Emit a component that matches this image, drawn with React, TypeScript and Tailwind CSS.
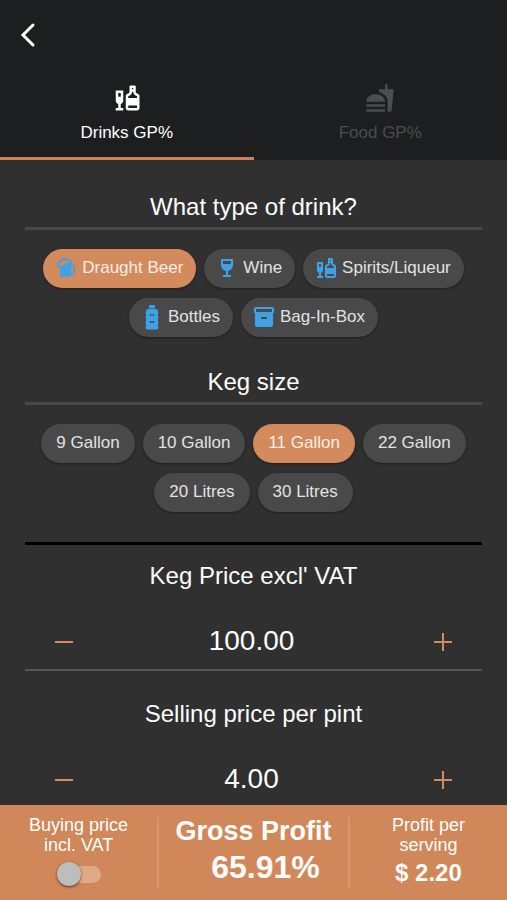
import { useState } from "react";
import type { ReactNode } from "react";
import { MdFastfood, MdInventory2, MdLiquor, MdSportsBar, MdWineBar } from "react-icons/md";

const VAT = 1.2;

const BottleIcon = ({ className }: { className?: string }) => (
  <svg viewBox="0 0 24 26" fill="currentColor" className={className} aria-hidden="true">
    <rect x="9" y="0" width="6" height="3" rx="0.5" />
    <path
      fillRule="evenodd"
      d="M9 4h6c2 0 3.500 1.500 3.500 3.500V9l-.7 1.200.7 1.200v3.200l-.7 1.200.7 1.200v3.200l-.7 1 .7 1V24c0 .8-.6 1.500-1.500 1.500H7c-.9 0-1.500-.7-1.500-1.500v-2l.7-1-.7-1v-3.200l.7-1.200-.7-1.200v-3.200l.7-1.200L5.500 9V7.500C5.500 5.500 7 4 9 4zm.5 5.500V11h5V9.500zm0 7.500v1.500h5V17z"
    />
  </svg>
);

const drinks = [
  { name: "Draught Beer", icon: <MdSportsBar className="w-6 h-6" /> },
  { name: "Wine", icon: <MdWineBar className="w-6 h-6" /> },
  { name: "Spirits/Liqueur", icon: <MdLiquor className="w-6 h-6" /> },
  { name: "Bottles", icon: <BottleIcon className="w-6 h-[25px]" /> },
  { name: "Bag-In-Box", icon: <MdInventory2 className="w-6 h-6" /> },
];

const kegs = [
  { name: "9 Gallon", pints: 72 },
  { name: "10 Gallon", pints: 80 },
  { name: "11 Gallon", pints: 88 },
  { name: "22 Gallon", pints: 176 },
  { name: "20 Litres", pints: 35 },
  { name: "30 Litres", pints: 52 },
];

interface ChipProps {
  label: string;
  icon?: ReactNode;
  selected: boolean;
  onClick: () => void;
}

function Chip({ label, icon, selected, onClick }: ChipProps) {
  return (
    <button
      type="button"
      aria-pressed={selected}
      onClick={onClick}
      className={`flex items-center gap-1 h-[39px] pb-px rounded-full text-[17px] whitespace-nowrap shadow-sm shadow-black/30 ${
        icon ? "pl-[11px] pr-[13px]" : "px-[15px]"
      } ${selected ? "bg-[#d38a5c] text-[#fbeee6]" : "bg-[#494949] text-[#e2e2e2]"}`}
    >
      {icon && <span className="text-[#3fa2e6]">{icon}</span>}
      {label}
    </button>
  );
}

function Heading({ children }: { children: ReactNode }) {
  return (
    <h2 className="pb-1 border-b-3 border-[#4a4a4a] text-center text-2xl leading-8 text-white">
      {children}
    </h2>
  );
}

interface StepperProps {
  id: string;
  label: string;
  value: string;
  step: number;
  onChange: (value: string) => void;
}

function Stepper({ id, label, value, step, onChange }: StepperProps) {
  const bump = (by: number) => onChange(Math.max(0, (parseFloat(value) || 0) + by).toFixed(2));

  return (
    <div className="pt-[15px] text-white">
      <label htmlFor={id} className="block text-center text-2xl leading-8">
        {label}
      </label>
      <div className="flex items-center justify-between px-[27px] pt-[26px] pb-[5px]">
        <button
          type="button"
          aria-label={`Decrease ${label}`}
          onClick={() => bump(-step)}
          className="flex items-center justify-center w-6 h-10 text-[#d38a5c]"
        >
          <svg viewBox="0 0 24 24" className="w-6 h-6" stroke="currentColor" strokeWidth="2">
            <path d="M3 13h18" />
          </svg>
        </button>
        <input
          id={id}
          type="text"
          inputMode="decimal"
          value={value}
          onChange={(e) => onChange(e.target.value)}
          className="flex-1 min-w-0 h-[46px] pr-1 bg-transparent text-center text-[28px] outline-none"
        />
        <button
          type="button"
          aria-label={`Increase ${label}`}
          onClick={() => bump(step)}
          className="flex items-center justify-center w-6 h-10 text-[#d38a5c]"
        >
          <svg viewBox="0 0 24 24" className="w-6 h-6" stroke="currentColor" strokeWidth="2">
            <path d="M3 13h18M12 4v18" />
          </svg>
        </button>
      </div>
    </div>
  );
}

export default function App() {
  const [tab, setTab] = useState("drinks");
  const [drink, setDrink] = useState("Draught Beer");
  const [keg, setKeg] = useState("11 Gallon");
  const [kegPrice, setKegPrice] = useState("100.00");
  const [sellPrice, setSellPrice] = useState("4.00");
  const [inclVat, setInclVat] = useState(false);

  const pints = kegs.find((k) => k.name === keg)?.pints ?? 88;
  const cost = (parseFloat(kegPrice) || 0) / (inclVat ? VAT : 1) / pints;
  const net = (parseFloat(sellPrice) || 0) / VAT;
  const profit = net - cost;
  const margin = net > 0 ? (profit / net) * 100 : 0;

  return (
    <div className="flex flex-col min-h-screen bg-[#303030] font-['Liberation_Sans',Arial,sans-serif]">
      <header className="bg-[#1c1e1f]">
        <button type="button" aria-label="Back" className="flex items-center h-[70px] pl-4 text-white">
          <svg viewBox="0 0 24 28" className="w-6 h-7" fill="none" stroke="currentColor" strokeWidth="3">
            <path d="M17 4 7 14l10 10" strokeLinecap="round" strokeLinejoin="miter" />
          </svg>
        </button>
        <div role="tablist" className="grid grid-cols-2">
          <button
            type="button"
            role="tab"
            aria-selected={tab === "drinks"}
            onClick={() => setTab("drinks")}
            className={`flex flex-col items-center gap-2 pt-[13px] pb-3 border-b-3 text-[17px] leading-6 ${
              tab === "drinks" ? "border-[#cc8158] text-white" : "border-transparent text-[#4b4d4e]"
            }`}
          >
            <MdLiquor className="w-[30px] h-[30px]" />
            Drinks GP%
          </button>
          <button
            type="button"
            role="tab"
            aria-selected={tab === "food"}
            onClick={() => setTab("food")}
            className={`flex flex-col items-center gap-2 pt-[13px] pb-3 border-b-3 text-[17px] leading-6 ${
              tab === "food" ? "border-[#cc8158] text-white" : "border-transparent text-[#4b4d4e]"
            }`}
          >
            <MdFastfood className="w-[30px] h-[30px]" />
            Food GP%
          </button>
        </div>
      </header>

      <main className="flex-1 px-[25px] pt-[31px]">
        <section>
          <Heading>What type of drink?</Heading>
          <div className="flex flex-wrap justify-center gap-x-2 gap-y-[10px] pt-[19px]">
            {drinks.map((d) => (
              <Chip
                key={d.name}
                label={d.name}
                icon={d.icon}
                selected={drink === d.name}
                onClick={() => setDrink(d.name)}
              />
            ))}
          </div>
        </section>

        <section className="pt-[29px]">
          <Heading>Keg size</Heading>
          <div className="flex flex-wrap justify-center gap-x-2 gap-y-[10px] pt-[19px]">
            {kegs.map((k) => (
              <Chip key={k.name} label={k.name} selected={keg === k.name} onClick={() => setKeg(k.name)} />
            ))}
          </div>
        </section>

        <hr className="mt-[30px] border-t-3 border-black" />
        <Stepper id="keg-price" label="Keg Price excl' VAT" value={kegPrice} step={1} onChange={setKegPrice} />
        <hr className="mb-3 border-t-2 border-[#555555]" />
        <Stepper
          id="sell-price"
          label="Selling price per pint"
          value={sellPrice}
          step={0.1}
          onChange={setSellPrice}
        />
      </main>

      <footer className="sticky bottom-0 grid grid-cols-[31fr_38fr_31fr] -mt-3 h-[95px] py-[10px] bg-[#d0875a] text-center text-white">
        <div className="flex flex-col items-center">
          <label htmlFor="incl-vat" className="text-lg leading-5">
            Buying price
            <br />
            incl. VAT
          </label>
          <span className="relative flex items-center w-11 h-6 mt-[7px]">
            <input
              id="incl-vat"
              type="checkbox"
              role="switch"
              checked={inclVat}
              onChange={(e) => setInclVat(e.target.checked)}
              className="peer appearance-none w-10 h-[17px] ml-1 rounded-full bg-[#e0aa88]"
            />
            <span className="absolute left-0 w-6 h-6 rounded-full bg-[#bdbdbd] shadow-sm shadow-black/50 pointer-events-none peer-checked:left-5 peer-checked:bg-white" />
          </span>
        </div>
        <div className="my-[2px] border-x-2 border-[#d8976c] font-bold">
          <div className="text-[27px] leading-7 whitespace-nowrap">Gross Profit</div>
          <div className="pl-6 pt-1 text-[32px] leading-9">{margin.toFixed(2)}%</div>
        </div>
        <div>
          <div className="text-lg leading-5">
            Profit per
            <br />
            serving
          </div>
          <div className="pt-1 text-2xl leading-7 font-bold">$ {profit.toFixed(2)}</div>
        </div>
      </footer>
    </div>
  );
}
